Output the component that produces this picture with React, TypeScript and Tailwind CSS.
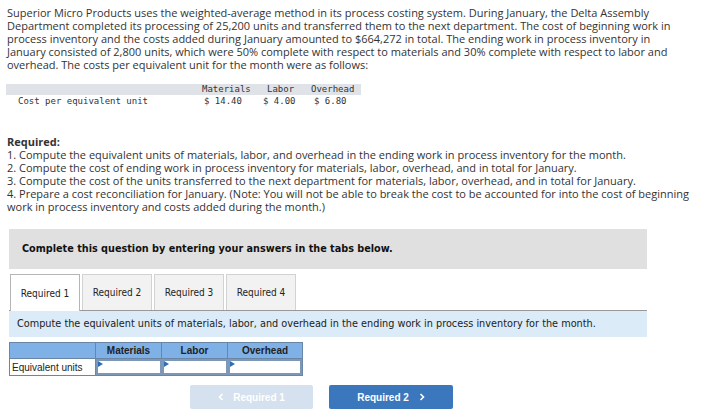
import React from "react";

const intro = [
  "Superior Micro Products uses the weighted-average method in its process costing system. During January, the Delta Assembly",
  "Department completed its processing of 25,200 units and transferred them to the next department. The cost of beginning work in",
  "process inventory and the costs added during January amounted to $664,272 in total. The ending work in process inventory in",
  "January consisted of 2,800 units, which were 50% complete with respect to materials and 30% complete with respect to labor and",
  "overhead. The costs per equivalent unit for the month were as follows:",
];

const required = [
  "1. Compute the equivalent units of materials, labor, and overhead in the ending work in process inventory for the month.",
  "2. Compute the cost of ending work in process inventory for materials, labor, overhead, and in total for January.",
  "3. Compute the cost of the units transferred to the next department for materials, labor, overhead, and in total for January.",
  "4. Prepare a cost reconciliation for January. (Note: You will not be able to break the cost to be accounted for into the cost of beginning",
  "work in process inventory and costs added during the month.)",
];

const tabs = ["Required 1", "Required 2", "Required 3", "Required 4"];

const sans = { fontFamily: "'Open Sans', Lato, sans-serif" };
const cond = { fontFamily: "'DejaVu Sans Condensed', 'DejaVu Sans', sans-serif" };
const arial = { fontFamily: "'Liberation Sans', Arial, sans-serif" };
const mono = { fontFamily: "'DejaVu Sans Mono', monospace" };

function InputCell({ w }: { w: string }) {
  return (
    <div className={`relative ${w} h-full border-2 border-[#7d97b6] bg-white`}>
      <span className="absolute left-0 top-0 h-0 w-0 border-y-[3px] border-l-[5px] border-y-transparent border-l-[#2f6db5]" />
    </div>
  );
}

export default function App() {
  return (
    <div className="relative h-[416px] w-[713px] overflow-hidden bg-white text-[#333]">
      <div className="pl-[7px] pt-[6px] text-[11px] leading-[13px]" style={sans}>
        {intro.map((l) => (
          <div key={l} className="whitespace-nowrap">
            {l}
          </div>
        ))}
      </div>

      <div className="mt-[13px] text-[9px] text-[#333]" style={mono}>
        <div className="ml-[6px] flex h-[11px] w-[355px] items-center bg-[#dfe3e8] leading-none">
          <span className="w-[196px]" />
          <span className="w-[65px]">Materials</span>
          <span className="w-[44px]">Labor</span>
          <span>Overhead</span>
        </div>
        <div className="flex h-[12px] items-center pl-[18px] leading-none">
          <span className="w-[186px]">Cost per equivalent unit</span>
          <span className="w-[59px]">$ 14.40</span>
          <span className="w-[51px]">$ 4.00</span>
          <span>$ 6.80</span>
        </div>
      </div>

      <div className="mt-[28px] pl-[7px] text-[11px] leading-[13px]" style={sans}>
        <div className="font-bold">Required:</div>
        {required.map((l) => (
          <div key={l} className="whitespace-nowrap">
            {l}
          </div>
        ))}
      </div>

      <div
        className="ml-[9px] mt-[16px] flex h-[40px] w-[638px] items-center bg-[#e0e0e0] pl-[13px] text-[10.75px] font-bold text-[#111]"
        style={cond}
      >
        Complete this question by entering your answers in the tabs below.
      </div>

      <div className="relative z-10 -mb-px ml-[10px] mt-[5px] flex gap-[2px] text-[10px] text-[#222]" style={cond}>
        {tabs.map((t, i) => (
          <div
            key={t}
            className={
              i === 0
                ? "flex h-[37px] w-[70px] items-center justify-center border border-b-0 border-[#b5b5b5] bg-white"
                : "flex h-[36px] w-[70px] items-center justify-center border border-b-0 border-[#d2d2d2] bg-[#f2f2f2]"
            }
          >
            {t}
          </div>
        ))}
      </div>

      <div
        className="ml-[9px] flex h-[27px] w-[638px] items-center border-t border-[#999] bg-[#dcebf8] pl-[8px] text-[10.8px] text-[#222]"
        style={cond}
      >
        Compute the equivalent units of materials, labor, and overhead in the ending work in process inventory for the month.
      </div>

      <div className="ml-[9px] mt-[5px] w-[294px] text-[10px] text-[#222]" style={arial}>
        <div className="flex h-[17px] border border-[#6a86a6] bg-[#80b1e6] font-bold">
          <div className="w-[86px] border-r border-[#6a86a6]" />
          <div className="flex w-[66px] items-center justify-center border-r border-[#6a86a6]">Materials</div>
          <div className="flex w-[66px] items-center justify-center border-r border-[#6a86a6]">Labor</div>
          <div className="flex flex-1 items-center justify-center">Overhead</div>
        </div>
        <div className="flex h-[17px] border border-t-0 border-[#6a86a6] bg-white">
          <div className="flex w-[86px] items-center border-r border-[#6a86a6] pl-[2px]">Equivalent units</div>
          <InputCell w="w-[66px]" />
          <InputCell w="w-[66px]" />
          <InputCell w="flex-1" />
        </div>
      </div>

      <div className="mt-[9px] flex text-[10px] font-bold text-white" style={arial}>
        <div className="ml-[190px] flex h-[24px] w-[123px] items-center justify-center gap-[9px] rounded-[2px] bg-[#d5e1ee]">
          <svg width="6" height="8" viewBox="0 0 6 8">
            <path d="M4.5 1 L1.5 4 L4.5 7" fill="none" stroke="#fff" strokeWidth="1.6" />
          </svg>
          <span>Required 1</span>
        </div>
        <div className="ml-[16px] flex h-[24px] w-[124px] items-center justify-center gap-[10px] rounded-[2px] bg-[#3b77bd]">
          <span>Required 2</span>
          <svg width="6" height="8" viewBox="0 0 6 8">
            <path d="M1.5 1 L4.5 4 L1.5 7" fill="none" stroke="#fff" strokeWidth="1.6" />
          </svg>
        </div>
      </div>
    </div>
  );
}
